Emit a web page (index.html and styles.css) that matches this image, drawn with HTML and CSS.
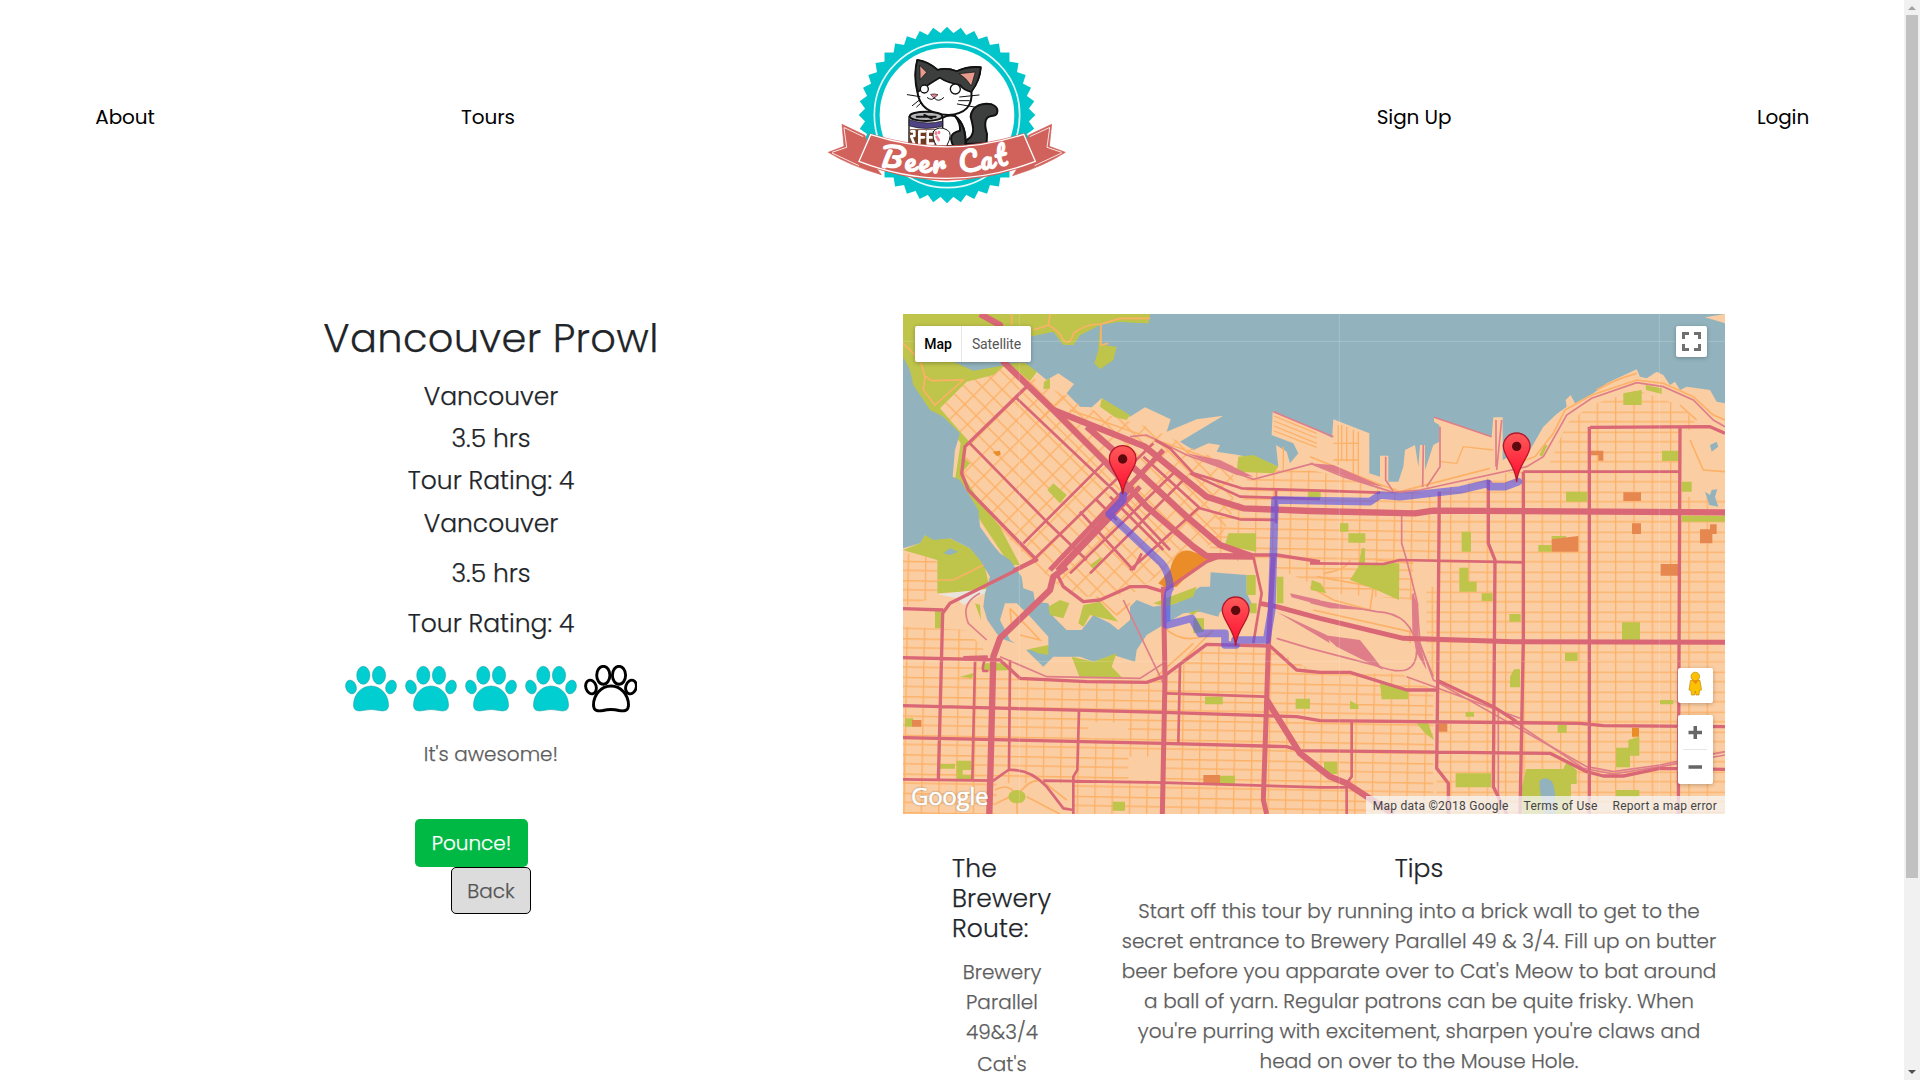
FILE: index.html
```html
<!DOCTYPE html>
<html lang="en">
<head>
<meta charset="utf-8">
<title>Beer Cat - Vancouver Prowl</title>
<link rel="stylesheet" href="styles.css">
</head>
<body>
<div class="page">
<header class="nav">
  <a class="nav-link">About</a>
  <a class="nav-link">Tours</a>
  <svg class="logo" viewBox="0 0 810 630" role="img" aria-label="Beer Cat">
    <defs>
      <rect id="tooth" x="223.6" y="127.6" width="374.8" height="374.8" fill="#00c5cb"/>
      <path id="banner-curve" d="M208 466Q411 518 625 457"/>
    </defs>
    <g transform="rotate(45 411 315)">
      <use href="#tooth"/><use href="#tooth" transform="rotate(9 411 315)"/><use href="#tooth" transform="rotate(18 411 315)"/><use href="#tooth" transform="rotate(27 411 315)"/><use href="#tooth" transform="rotate(36 411 315)"/><use href="#tooth" transform="rotate(45 411 315)"/><use href="#tooth" transform="rotate(54 411 315)"/><use href="#tooth" transform="rotate(63 411 315)"/><use href="#tooth" transform="rotate(72 411 315)"/><use href="#tooth" transform="rotate(81 411 315)"/>
    </g>
    <circle cx="411" cy="315" r="218" fill="none" stroke="#e4fafa" stroke-width="5"/>
    <circle cx="411" cy="315" r="202" fill="#fff"/>
    <g stroke="#111" stroke-width="6" stroke-linejoin="round" stroke-linecap="round">
      <path d="M470 390C500 375 488 345 482 320C485 285 520 277 545 283C570 292 566 318 545 318C520 320 524 350 531 372L530 400L465 402Z" fill="#3d3f3f"/>
      <path d="M375 345Q400 310 435 318Q470 345 466 408L375 408Z" fill="#fff"/>
      <path d="M435 318Q470 345 466 408L430 408Q410 370 450 362Q452 340 435 318Z" fill="#3d3f3f"/>
      <path d="M322 150Q355 155 383 180Q410 172 440 184Q475 168 512 172Q510 210 484 242Q492 310 415 315Q330 312 322 245Q310 195 322 150Z" fill="#fff"/>
      <path d="M322 150Q355 155 383 180Q410 172 440 184Q475 168 512 172Q510 210 484 246Q460 240 450 225Q410 218 389 203Q360 220 323 246Q310 195 322 150Z" fill="#3d3f3f" stroke-width="5"/>
      <path d="M330 167L350 187L331 208ZM448 191L496 186L484 228Q470 205 448 191Z" fill="#e79b8d" stroke-width="2"/>
      <circle cx="343" cy="237" r="12" fill="#fff" stroke-width="4"/><circle cx="436" cy="237" r="15" fill="#fff" stroke-width="4"/>
      <path d="M363 253Q374 250 384 254L373 264Z" fill="#e77f8c" stroke-width="2"/>
      <path d="M373 264Q365 273 352 263M373 264Q385 279 401 263M330 260L292 254M327 271L307 287M333 279L320 291M449 261L507 255M446 272H478M442 282L493 291" fill="none" stroke-width="3"/>
      <path d="M297 320V407H398V320Z" fill="#fff" stroke-width="4"/>
      <path d="M299 329Q350 347 398 333V348Q350 363 299 348Z" fill="#504487" stroke-width="2"/>
      <ellipse cx="348" cy="319" rx="49" ry="14" fill="#b7b7b9"/><path d="M320 320H377M343 315L365 325" fill="none"/>
      <path d="M298 358L398 358V404H298Z" fill="#6d3b22" stroke="none"/>
      <path d="M304 364H313V378H304M304 380L312 400M328 364H345M328 364V401M328 382H342M353 364H370M353 364V401H370M353 382H367" fill="none" stroke="#fff" stroke-width="8"/>
      <path d="M370 365Q385 345 412 360Q430 370 410 408H380Q365 385 370 365Z" fill="#fff" stroke-width="3"/>
      <path d="M380 380l6 10M378 368v3M387 366v3" stroke="#ec8191" stroke-width="8"/>
    </g>
    <g fill="#d1625b" stroke="#d1625b" stroke-width="2">
      <path d="M96 343L165 376L185 455L214 494Q120 467 55 427L102 409Z"/>
      <path d="M725 343L655 376L635 455L608 497Q705 467 766 427L718 409Z"/>
      <path d="M180 371Q411 445 643 370L680 455Q411 566 144 455Z"/>
    </g>
    <path class="trim" d="M182 374Q411 448 641 373L676 454Q411 556 147 454Z"/>
    <path class="trim fine" d="M101 352L160 380M66 427L110 412L102 354M66 429L147 467M720 352L659 380M755 427L711 412L719 354M755 429L674 467"/>
    <text class="logo-text"><textPath href="#banner-curve" textLength="392">Beer Cat</textPath></text>
  </svg>
  <a class="nav-link">Sign Up</a>
  <a class="nav-link">Login</a>
</header>
<main class="tour">
  <section class="summary">
    <h1>Vancouver Prowl</h1>
    <ul class="facts">
      <li>Vancouver</li><li>3.5 hrs</li><li>Tour Rating: 4</li><li>Vancouver</li><li class="loose">3.5 hrs</li><li class="loose">Tour Rating: 4</li>
    </ul>
    <svg class="paws" viewBox="0 0 292 48">
      <defs><g id="paw">
        <ellipse cx="18.300" cy="10.300" rx="6.600" ry="9"/><ellipse cx="34" cy="10.300" rx="6.600" ry="9"/>
        <ellipse cx="6" cy="22" rx="5.200" ry="7" transform="rotate(-18 6 22)"/><ellipse cx="46" cy="22" rx="5.200" ry="7" transform="rotate(18 46 22)"/>
        <path d="M26 21C36 21 43.500 30 43.500 40C43.500 46 39 46.500 34 45.500Q26 43.500 18 45.500C13 46.500 8.500 46 8.500 40C8.500 30 16 21 26 21Z"/>
      </g></defs>
      <g class="paw-on"><use href="#paw"/><use href="#paw" x="60"/><use href="#paw" x="120"/><use href="#paw" x="180"/></g>
      <g class="paw-off"><use href="#paw" x="240"/></g>
    </svg>
    <p class="blurb">It's awesome!</p>
    <div class="actions"><a class="btn go">Pounce!</a><a class="btn back">Back</a></div>
  </section>
  <section class="details">
    <div class="map">
      <svg class="map-art" viewBox="9 12 2466 1500" preserveAspectRatio="none">
        <defs>
          <pattern id="diag" width="48" height="37" patternUnits="userSpaceOnUse" patternTransform="translate(210 400) rotate(45)"><path d="M0 0H48M0 0V37" class="minor tiled"/></pattern>
          <pattern id="grid" width="52" height="58" patternUnits="userSpaceOnUse" patternTransform="translate(70 1043) rotate(1)"><path d="M0 0H52M0 0V58" class="minor tiled"/><path d="M0 29H52" class="minor"/></pattern>
          <pattern id="east" width="55" height="60" patternUnits="userSpaceOnUse" patternTransform="translate(1870 485)"><path d="M0 0H55M0 0V60" class="minor tiled"/><path d="M0 30H55" class="minor"/></pattern>
          <linearGradient id="pinfill" x1="0" y1="0" x2="0" y2="1"><stop offset="0" stop-color="#ff5a5a"/><stop offset="1" stop-color="#ff0a2e"/></linearGradient>
          <g id="pin"><path d="M0 0C-3-50-40-75-40-106A40 40 0 0 1 40-106C40-75 3-50 0 0Z" fill="url(#pinfill)" stroke="#b5182a" stroke-width="4"/><circle cy="-106" r="14" fill="#5c0a0e"/></g>
        </defs>
        <path class="land" d="M9 12L300 150L410 185L440 210L475 190L522 222L500 250L540 290L575 292L605 265L690 320L735 292L812 328L800 365L890 328L970 317L840 395L880 420L925 400L960 405L950 425L1015 435L1060 445L1110 460L1135 470L1128 405L1160 425L1170 460L1195 430L1180 400L1115 375L1118 305L1230 350L1296 383L1300 328L1408 370V490L1440 500V437H1465V515H1495L1510 470L1515 420L1545 405L1555 470L1560 405H1575V480L1600 405L1618 395V345L1602 335V322L1775 380L1780 322H1808V450L1850 430L1890 420L1930 350L1970 312L2000 290L1997 270L2012 255L2025 280L2080 250L2120 220L2210 178L2220 200L2240 205L2270 185L2290 195L2310 225L2325 215L2340 240L2360 230L2430 240L2450 275L2475 280V1512H9Z"/>
        <path class="land" d="M2415 22L2475 12V40Z"/>
        <path fill="url(#diag)" d="M310 170L400 205L560 295L740 350L1000 470V600L960 690L850 740L700 850L600 860L520 860L420 780L330 690L205 540L185 480L210 400L120 295L200 215Z"/>
        <path fill="url(#grid)" d="M9 950L200 960L270 1040L360 1110H790L920 1010H1110L1250 1090H1500L1600 1140V1512H9ZM9 730L110 740L112 860L9 890Z"/>
        <path fill="url(#grid)" d="M930 640L1040 560V480H1230L1610 560V750L1540 760V870L1300 850L1120 770L930 740Z"/>
        <path fill="url(#east)" d="M1610 540L1860 480L1940 480L2000 340L2075 285L2210 240L2350 290L2400 360H2340L2338 560H2475V1512H2070L1860 1512H1610V1120L1580 1050V830H1610Z"/>
        <path class="land" d="M565 1237H685V1285H565ZM685 1340H785V1410H685ZM290 1420H520V1512H290Z"/>
        <path class="minor wide" d="M285 1440Q330 1415 350 1460Q390 1400 430 1415L500 1470M350 1460L352 1512M380 1460L480 1512M330 1460L290 1480M790 950Q850 1010 930 970M1430 750L1540 760M1230 830L1300 870L1410 900L1420 830L1250 800M1240 900L1530 965V1000M1270 790Q1340 780 1350 750M2370 390L2410 480L2475 485M2340 285L2390 330"/>
        <path class="park" d="M9 12H750L745 40L655 35L600 45L540 75L520 105H490L460 65L400 70L375 160L410 185L390 212L350 180L310 170L280 195L200 215L120 295L185 370L212 400L192 410L190 440L210 460L185 490L230 560L300 650L360 765L330 765L240 630L165 510L182 400L130 325L90 305L60 260L22 215L9 190Z"/>
        <path class="water" d="M393 72L460 65L490 105H520L560 65V130L420 185L375 160L340 160V60Z"/>
        <path class="park" d="M320 12H750L745 40L655 35L600 45L540 75L520 105H490L460 65L400 78H320ZM345 158H375L410 185L390 212L350 180Z"/>
        <path class="park" d="M600 45L605 105L650 110L640 150L600 178L583 160L595 120ZM432 215L450 205V235L430 238ZM605 265L690 315L680 330L645 322L600 290ZM1015 440L1060 435L1135 470L1120 490L1010 485ZM460 520L500 555L480 580L442 540ZM570 765L605 740V755L580 778ZM985 670H1068V725L975 705ZM1225 540H1262V565H1225ZM112 750L9 720L60 700L75 675L150 685L210 715L250 750L270 840L112 850Z"/>
        <path class="sand" d="M112 853L280 835L190 885L170 865Z"/>
        <path class="park" d="M105 900H123V955H105ZM225 880L240 885L243 930ZM250 1060L310 1060L340 1080L250 1083ZM180 1100L225 1088L215 1105Z"/>
        <path class="water" d="M9 140L30 180L40 225L90 300L130 320L180 370L165 420L158 500L180 510L235 600L240 650L275 700L300 730L330 750L365 800L370 835L400 845L405 875L445 880L460 920L500 960H545L580 915L630 940L655 960L690 930V890L710 870L760 890L830 880L900 830H930L932 787L1040 795V850L1055 880L1050 905H960L955 920L900 905L850 910L790 945L740 975L710 1020L705 1055L640 1035L580 1055L540 1040H460L430 1070L378 1020L445 1010V980L395 925L350 880H315L300 930L330 990L345 1000L300 985L262 930L250 890L255 850L270 800L240 750L210 715L150 685L100 690L75 675L60 700L9 715Z"/>
        <path class="water" d="M160 155L220 182L320 165L350 155ZM130 730L150 715L175 725L150 735ZM2430 405L2450 395L2455 410L2435 425ZM2415 545L2430 555L2435 540L2452 538L2445 560L2455 590L2428 585Z"/>
        <path class="park" d="M445 890L480 870L508 880L490 925L450 915ZM550 885L600 875L655 935L610 925L570 915L550 950L535 940ZM385 1018L445 1005V1035L415 1030ZM515 1040L580 1055L650 1030L635 1070L668 1105H540ZM760 880L810 860L890 830L880 860L800 890ZM865 910L900 898L880 915ZM1040 795H1067V855H1040ZM1050 880H1070V910H1050ZM880 925H912V965L880 970ZM1130 800H1150V880H1130ZM15 1225H40V1250H15ZM120 1362H165V1376H120ZM170 1352H214V1380H188V1395H214V1408H170ZM325 1460a26 20 0 1 0 52 0a26 20 0 1 0-52 0ZM638 1475H675V1502H638ZM960 1397H1005V1422H960ZM915 1160H968V1183H915ZM1187 1166H1230V1196H1187ZM1235 810L1262 820L1280 850L1232 840Z"/>
        <path class="park" d="M1320 640H1345V665H1320ZM1345 670H1396V698H1345ZM1385 715H1395V760L1498 760L1497 870L1430 840L1350 810L1375 770ZM1685 665H1713V725H1685ZM1678 773H1705V815H1730V845H1678ZM1745 850H1778V873H1745ZM1828 912H1862V935H1828ZM1915 705H1955V725H1915ZM1955 678H1998V688H1955ZM1998 545H2062V575H1998ZM1935 402L1942 407L1926 440L1918 435ZM2170 250L2225 240V285H2170ZM2237 225L2285 235V252L2238 240ZM2286 422H2336V453H2286ZM2345 515H2375V545H2345ZM2345 617H2475V635H2345ZM2166 937H2220V990H2166ZM2280 1170H2320V1183H2280ZM1995 1028H2033V1053H1995ZM1842 1078H1860V1132H1830V1100ZM1440 1120L1525 1140V1168H1445ZM1350 1172L1375 1185V1197H1350ZM1550 1240H1585L1602 1290L1575 1270ZM1697 1206H1722V1220H1697ZM1973 1245H2000V1268H1973ZM2148 1313H2185V1290L2218 1280V1337H2190V1372H2148ZM2148 1440H2218V1460H2148ZM1667 1390H1773V1432H1667ZM1272 1355H1312V1392H1272ZM1878 1377H1990L2000 1355L2030 1380V1422H2013V1512H1866V1430Z"/>
        <path class="water" d="M1918 1415Q1930 1395 1955 1413Q1970 1440 1965 1512H1935Q1920 1465 1918 1415Z"/>
        <path class="civic" d="M775 820L810 780Q825 715 870 722L915 738L930 750L850 810L830 830L800 835ZM278 425L300 422L302 435L290 438ZM2196 1253H2217V1280H2196Z"/>
        <path class="school" d="M36 1230H64V1250H36ZM910 1395H960V1420H910ZM1955 688L2035 678V725H1955ZM2072 422H2110V452H2095V436H2072ZM2170 547H2223V573H2170ZM2196 640H2223V672H2196ZM2400 658H2430V643H2450V672H2437V700H2400ZM2282 762H2336V797H2282ZM1615 1240H1642V1265H1615Z"/>
        <path class="minor wide" d="M9 100L60 150L75 200L70 240L105 285L190 210L95 212L70 195M335 12V45M400 60L445 45L450 12M445 45Q475 60 490 90Q510 110 520 70Q560 40 600 43L660 25L750 25M603 45V105L625 100M112 810H160L250 765M330 895L420 990L360 975M330 895L335 945M650 915L690 880M590 860L650 915M770 1100L880 1000M840 1060L940 960"/>
        <path class="minor" d="M1122 318L1250 370M1122 333L1250 384M1122 348L1250 400M1122 363L1250 412M1315 345V465M1325 345V450M1340 350V455M1360 360V500M1375 365V500M1300 400H1375M1300 450H1375M1620 455L1670 460L1690 410L1780 420M510 300L1000 470M500 255L420 330M1150 410V480"/>
        <path class="minor wide" d="M1230 440L1430 520L1500 545L1770 475M2090 240Q2140 210 2210 190M1850 460L1905 440L1960 370L1995 300L2075 255L2210 210L2290 220L2380 260L2440 315L2475 330"/>
        <path class="rail fill" d="M860 430L960 450L1060 500L1010 495ZM1230 460L1300 465L1450 530L1390 520ZM1230 865L1400 900L1290 895L1230 880ZM1270 975L1380 990L1420 1040L1450 1080L1400 1055L1310 1010ZM1130 905L1280 975L1290 1000ZM1535 850L1555 880V980L1580 1080L1550 1030L1537 960ZM1170 850L1260 870V885L1175 862Z"/>
        <path class="rail" d="M690 380L740 375L860 435L1060 508L1240 460M1120 305L1300 380M1230 460L1330 500L1480 547L1560 540L1880 470L1930 440L2000 315L2075 265L2210 218L2290 230L2380 270L2440 330L2475 350M1457 440V510L1480 545M1570 405L1568 530M1620 350V470L1580 530M1602 322L1775 380M1788 330V470M1805 330L1790 480M670 870L790 1120M240 850Q180 880 205 940L260 990M300 1040L440 1100L720 1105L790 1060M1505 610V700L1520 750L1550 870L1560 1000L1600 1110L2060 1370L2140 1385L2280 1365L2475 1325M1230 1015L1440 1070Q1550 1110 1550 1020Q1540 910 1430 905L1230 870M1130 985L1230 1015M1520 1100L1860 1225M1795 1200V1512"/>
        <path class="rail" d="M1850 1240L2050 1375L2140 1392L2280 1370L2475 1335M1540 850L1550 980L1600 1100"/>
        <g class="major">
          <path class="w8" d="M765 390L810 415L880 490L1025 535L1260 542L1440 548M870 490L1020 560L1260 567M730 440L900 595L1020 628L1130 630M345 260L640 540L810 720M210 400L440 635L560 750M610 460L370 700M760 400L400 750L340 780M830 480L510 790M860 500L570 790M900 590L690 780M590 570L650 630M540 605L700 780M700 780L725 730M630 560L790 720M225 1055L217 1410M330 1050L327 1380M537 1200L532 1380L520 1400V1512M840 1065L835 1300M800 1150L1095 1160M1060 740L1085 850L1060 1000M1230 760L1450 762L1500 750L1870 757M1870 485H2338M1355 1230V1400L1340 1420V1512M9 1408L280 1412L325 1380Q390 1375 440 1430L490 1495L520 1500M430 1412L790 1418L1260 1432H1340M190 1042L260 1040Q245 1065 250 1083H265M1128 540V640"/>
          <path class="w10" d="M380 230L195 410L185 490L205 540L410 750L150 880L128 910L115 1410M9 896L130 900M700 530L470 780M470 790L490 830L550 875L600 870L690 830L740 830L790 845M790 845L920 755L960 740M9 1043L300 1050L360 1105L560 1115L740 1117L790 1100L920 1003L1110 1008L1190 1080L1260 1087H1350L1520 1140H1610M9 1187L790 1207L1190 1220L1260 1232L2040 1240L2110 1247L2475 1250M9 1283L790 1300L1160 1310L1200 1322L1480 1325L1950 1330L2060 1385L2110 1398H2170L2280 1375L2475 1378M1618 545L1613 1130L1610 1375L1645 1420V1512M1765 510V700L1785 750L1780 1430L1820 1512M1870 485V990L1860 1512M2068 350V1512M2340 355L2335 1512M2070 352L2430 350L2475 370M1610 1110L1780 1190L1850 1235M1060 735L1130 735L1260 755"/>
          <path class="w14" d="M790 420L450 780M720 530L480 780M790 830L795 1100L787 1512M1120 740L1105 1010L1100 1170L1090 1470L1100 1512M1080 880L1130 890L1260 925L1510 985L1840 995L2475 997"/>
          <path class="w18" d="M240 12L300 45L310 155L460 300L620 460L740 590L880 710L920 738L1060 740M460 300L735 410L920 560L1030 595L1230 603L1545 610L1600 602L2475 607M560 350L720 490L860 620L960 705L1060 740M500 770L460 800L450 840L300 985L280 1040L268 1512M1100 1170L1200 1330L1290 1400L1340 1420L1480 1512"/>
        </g>
        <path class="tile" d="M9 94H2475M9 1054H2475M358 12V1512M1318 12V1512M2278 12V1512"/>
        <path class="route" d="M670 555L668 570L628 612L785 760Q808 785 810 835Q797 850 800 945L875 925L900 970H975V1005H1008M1005 990H1100L1115 900L1125 570L1410 575L1440 555L1500 560L1680 540L1765 520L1770 530H1815L1855 515"/>
        <use href="#pin" x="668" y="553"/><use href="#pin" x="1850" y="515"/><use href="#pin" x="1007" y="1007"/>
      </svg>
      <div class="map-type"><b>Map</b><span>Satellite</span></div>
      <div class="control full"><svg viewBox="0 0 31 31"><path d="M7.500 13V7.500H13M18 7.500H23.500V13M23.500 18V23.500H18M13 23.500H7.500V18"/></svg></div>
      <div class="control street"><svg viewBox="0 0 35 35"><path d="M12.500 12.500Q17.300 10 22 12.500L23.500 22L21.500 22.500L21 27H18L17.300 23L16.600 27H13.500L13 22.500L11 22Z" fill="#fbc102" stroke="#c48a08" stroke-width=".7"/><circle cx="17.300" cy="8.500" r="4.300" fill="#fbc102" stroke="#c48a08" stroke-width=".7"/><path d="M14 12.500H21L17.500 16Z" fill="#ed8b12"/></svg></div>
      <div class="control zoom"><svg viewBox="0 0 35 69"><path d="M10.500 17.500H24M17.250 11V24M10.500 52H24" stroke="#666" stroke-width="3.500"/><path d="M5 34.500H29" stroke="#e6e6e6"/></svg></div>
      <span class="google">Google</span>
      <div class="legal"><span>Map data ©2018 Google</span><span>Terms of Use</span><span>Report a map error</span></div>
    </div>
    <div class="info">
      <div class="stops"><h2>The<br>Brewery<br>Route:</h2><p>Brewery<br>Parallel<br>49&amp;3/4</p><p>Cat's</p></div>
      <div class="tips"><h2>Tips</h2><p>Start off this tour by running into a brick wall to get to the<br>secret entrance to Brewery Parallel 49 &amp; 3/4. Fill up on butter<br>beer before you apparate over to Cat's Meow to bat around<br>a ball of yarn. Regular patrons can be quite frisky. When<br>you're purring with excitement, sharpen you're claws and<br>head on over to the Mouse Hole.</p></div>
    </div>
  </section>
</main>
</div>
<div class="scrollbar"><i class="up"></i><div class="thumb"></div><i class="down"></i></div>
</body>
</html>
```
FILE: styles.css
```css
* { box-sizing: border-box; }
body { margin: 0; width: 1920px; height: 1080px; overflow: hidden; display: flex; background: #fff; color: #212529; font: 300 20px/30px Poppins, Inter, sans-serif; }
h1, h2, p, ul { margin: 0; padding: 0; font-weight: 300; }
.page { width: 1904px; height: 1080px; overflow: hidden; }
.nav { display: grid; grid-template-columns: 250px 476px 440px 496px 242px; align-items: center; justify-items: center; height: 220px; padding-top: 10px; }
.nav-link { color: #000; font-weight: 400; padding-top: 4px; letter-spacing: -.1px; }
.logo { width: 270px; height: 210px; margin-right: 2px; }
.logo-text { font: 400 82px Pacifico, Lobster, "Lato Black", Lato, cursive; fill: #fff; stroke: #fff; stroke-width: 3px; }
.trim { fill: none; stroke: #fff; stroke-width: 4; }
.fine { stroke-width: 2.500; }
.tour { display: grid; grid-template-columns: 824px 822px; padding: 94px 0 0 79px; -webkit-text-stroke: .25px currentColor; }
.summary { text-align: center; display: flex; flex-direction: column; align-items: center; }
h1 { font-size: 40px; line-height: 48px; letter-spacing: .3px; }
.facts { list-style: none; font-size: 25px; line-height: 30px; padding-top: 19.500px; }
.facts li { height: 42.400px; }
.facts .loose { height: 50px; padding-top: 7.500px; }
.paws { width: 292px; height: 48px; margin-top: 14.400px; }
.paw-on { fill: #00ced1; stroke: #169b9e; stroke-width: .5; }
.paw-off { fill: #fff; stroke: #000; stroke-width: 2.900; }
.blurb, .details p { color: #5c5c5c; letter-spacing: .02px; }
.blurb { margin-top: 26px; }
.actions { display: flex; flex-direction: column; margin-top: 49.600px; }
.btn { border-radius: 5px; }
.go { width: 113px; height: 48px; line-height: 48px; color: #fff; background: #00b945; margin-right: 39px; align-self: center; }
.back { width: 80px; height: 47px; line-height: 46px; border: 1px solid #000; background: #dcdcdc; color: #555; align-self: center; }
.map { position: relative; height: 500px; overflow: hidden; background: #92b3bd; font-family: Roboto, sans-serif; -webkit-text-stroke: 0; }
.map-art { display: block; width: 822px; height: 500px; }
.land { fill: #fbcda2; }
.park { fill: #bfc44a; }
.water { fill: #92b3bd; }
.sand { fill: #e9e5dc; }
.civic { fill: #ea8c28; }
.school { fill: #e6874f; }
.minor { fill: none; stroke: #fcb167; stroke-width: 4; }
.tiled { stroke-width: 8; }
.wide { stroke-width: 5; }
.major { fill: none; stroke: #d96775; stroke-linejoin: round; }
.w8 { stroke-width: 8; }
.w10 { stroke-width: 10; }
.w14 { stroke-width: 15; }
.w18 { stroke-width: 19; }
.rail { fill: none; stroke: #df7e89; stroke-width: 5; }
.fill { fill: #df7e89; stroke: none; }
.tile { fill: none; stroke: #fff; stroke-opacity: .18; stroke-width: 3; }
.route { fill: none; stroke: #504ff0; stroke-opacity: .6; stroke-width: 23; stroke-linejoin: round; stroke-linecap: round; }
.map-type { position: absolute; left: 12px; top: 12px; width: 116px; height: 36px; display: flex; background: #fff; border-radius: 2px; box-shadow: 0 1px 4px rgba(0,0,0,.3); font-size: 14px; line-height: 36px; text-align: center; color: #565656; font-weight: 400; }
.map-type b { width: 47px; color: #000; font-weight: 500; border-right: 1px solid #e6e6e6; }
.map-type span { flex: 1; letter-spacing: -.1px; }
.control { position: absolute; background: #fff; border-radius: 2px; box-shadow: 0 1px 4px rgba(0,0,0,.25); }
.control svg { display: block; fill: none; }
.full { left: 773px; top: 12px; width: 31px; height: 31px; }
.full path { stroke: #707070; stroke-width: 3; }
.street { left: 775px; top: 354px; width: 35px; height: 35px; }
.zoom { left: 775px; top: 401px; width: 35px; height: 69px; }
.google { position: absolute; left: 8px; top: 466px; color: #fff; font: 400 24px/32px "Open Sans", sans-serif; letter-spacing: -.3px; -webkit-text-stroke: .7px #fff; text-shadow: 0 0 2px rgba(0,0,0,.6); }
.legal { position: absolute; right: 0; bottom: 0; height: 18px; display: flex; font-size: 12px; letter-spacing: .24px; line-height: 20px; font-weight: 400; color: #444; background: rgba(245,245,245,.75); padding: 0 8px 0 7px; gap: 15px; white-space: nowrap; }
.info { display: flex; padding: 40px 0 0 50px; white-space: nowrap; }
.info h2 { font-size: 25px; line-height: 30px; margin-bottom: 12px; }
.stops { width: 98px; text-align: center; }
.stops h2 { text-align: left; letter-spacing: .15px; margin: 0 0 13px -1px; }
.stops p + p { margin-top: 2px; }
.tips { width: 596px; margin-left: 70px; text-align: center; }
.scrollbar { width: 16px; height: 1080px; display: flex; flex-direction: column; align-items: center; background: #f1f1f1; }
.thumb { width: 12px; height: 863px; background: #c1c1c1; margin-top: 5px; }
.up, .down { border: 4px solid transparent; }
.up { border-top: 0; border-bottom-color: #a3a3a3; margin-top: 6px; }
.down { border-bottom: 0; border-top-color: #505050; margin-top: auto; margin-bottom: 6px; }
```
